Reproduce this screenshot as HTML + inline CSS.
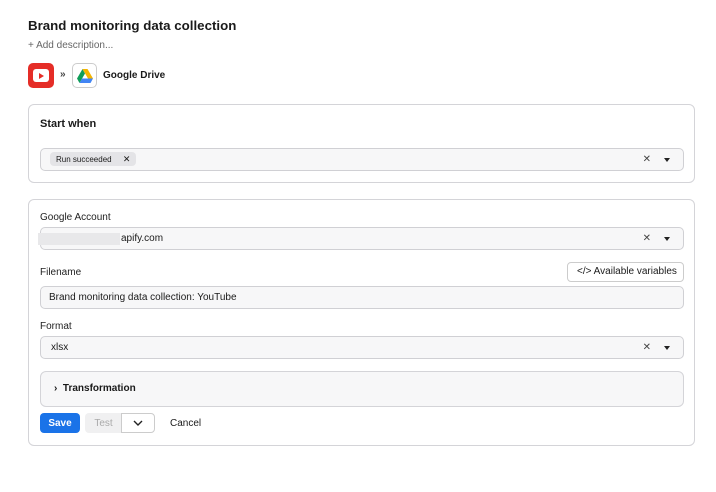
<!DOCTYPE html>
<html><head><style>
*{box-sizing:border-box;margin:0;padding:0}
body{width:716px;height:492px;background:#fff;font-family:"Liberation Sans",sans-serif;color:#1a1a1a;position:relative;overflow:hidden}
.a{position:absolute}
.card{position:absolute;left:28px;width:667px;border:1px solid #d4d4d8;border-radius:6px;background:#fff}
.sel{position:absolute;left:40px;width:644px;height:23px;border:1px solid #d0d0d4;border-radius:5px;background:#f7f7f8;font-size:10px;line-height:21px}
.lbl{position:absolute;left:40px;font-size:10px;color:#222}
.x{position:absolute;right:32px;top:0;font-size:10px;color:#444}
.caret{position:absolute;right:13px;top:9px;width:0;height:0;border-left:3.5px solid transparent;border-right:3.5px solid transparent;border-top:4px solid #222}
</style></head><body>
<div class="a" style="left:28px;top:18px;font-size:13.3px;font-weight:bold">Brand monitoring data collection</div>
<div class="a" style="left:28px;top:40px;font-size:10px;color:#666">+ Add description...</div>
<div class="a" style="left:28px;top:63px;width:26px;height:25px;background:#e52d27;border-radius:5px">
 <div class="a" style="left:5px;top:6px;width:16px;height:13px;background:#fff;border-radius:3px"></div>
 <div class="a" style="left:11px;top:10px;width:0;height:0;border-top:3px solid transparent;border-bottom:3px solid transparent;border-left:5px solid #e52d27"></div>
</div>
<div class="a" style="left:60px;top:69px;font-size:10px;font-weight:bold;color:#444">»</div>
<div class="a" style="left:72px;top:63px;width:25px;height:25px;border:1px solid #ccc;border-radius:5px;background:#fff">
<svg class="a" style="left:4px;top:5px" width="16" height="14" viewBox="0 0 16 14"><path d="M5.5 0L0 9.5 2.5 14 8 4.5z" fill="#0f9d58"/><path d="M5.5 0h5L16 9.5h-5z" fill="#f4b400"/><path d="M2.5 14h11L16 9.5H5z" fill="#4285f4"/></svg>
</div>
<div class="a" style="left:103px;top:70px;font-size:10px;font-weight:bold">Google Drive</div>

<div class="card" style="top:104px;height:79px"></div>
<div class="a" style="left:40px;top:118px;font-size:11px;font-weight:bold">Start when</div>
<div class="sel" style="top:148px"><div class="a" style="left:9px;top:3px;width:86px;height:14px;background:#e4e4e7;border-radius:4px;font-size:8px;line-height:14px;padding-left:6px">Run succeeded <span style="margin-left:9px;font-size:9px">✕</span></div><span class="x">✕</span><span class="caret"></span></div>

<div class="card" style="top:199px;height:247px"></div>
<div class="lbl" style="top:212px">Google Account</div>
<div class="sel" style="top:227px"><div class="a" style="left:-3px;top:5px;width:82px;height:12px;background:#e8e8ea"></div><span class="a" style="left:80px;top:0">apify.com</span><span class="x">✕</span><span class="caret"></span></div>
<div class="lbl" style="top:267px">Filename</div>
<div class="a" style="left:567px;top:262px;width:117px;height:20px;border:1px solid #ccc;border-radius:4px;font-size:10px;line-height:18px;padding-left:9px">&lt;/&gt; Available variables</div>
<div class="sel" style="top:286px"><span class="a" style="left:8px;top:0">Brand monitoring data collection: YouTube</span></div>
<div class="lbl" style="top:321px">Format</div>
<div class="sel" style="top:336px"><span class="a" style="left:10px;top:0">xlsx</span><span class="x">✕</span><span class="caret"></span></div>
<div class="a" style="left:40px;top:371px;width:644px;height:36px;border:1px solid #d4d4d8;border-radius:6px;background:#f7f7f8;font-size:10px;font-weight:bold;line-height:34px;padding-left:13px">›&nbsp;&nbsp;Transformation</div>
<div class="a" style="left:40px;top:413px;width:40px;height:20px;background:#1a73e8;border-radius:4px;color:#fff;font-size:10px;font-weight:bold;text-align:center;line-height:21px">Save</div>
<div class="a" style="left:85px;top:413px;width:37px;height:20px;background:#f0f0f1;border-radius:4px 0 0 4px;color:#aaa;font-size:10px;text-align:center;line-height:21px">Test</div>
<div class="a" style="left:121px;top:413px;width:34px;height:20px;border:1px solid #ccc;border-radius:0 4px 4px 0;background:#fff">
<svg class="a" style="left:11px;top:6px" width="10" height="7" viewBox="0 0 10 7"><path d="M1 1l4 4 4-4" fill="none" stroke="#222" stroke-width="1.4"/></svg></div>
<div class="a" style="left:170px;top:418px;font-size:10px">Cancel</div>
</body></html>
